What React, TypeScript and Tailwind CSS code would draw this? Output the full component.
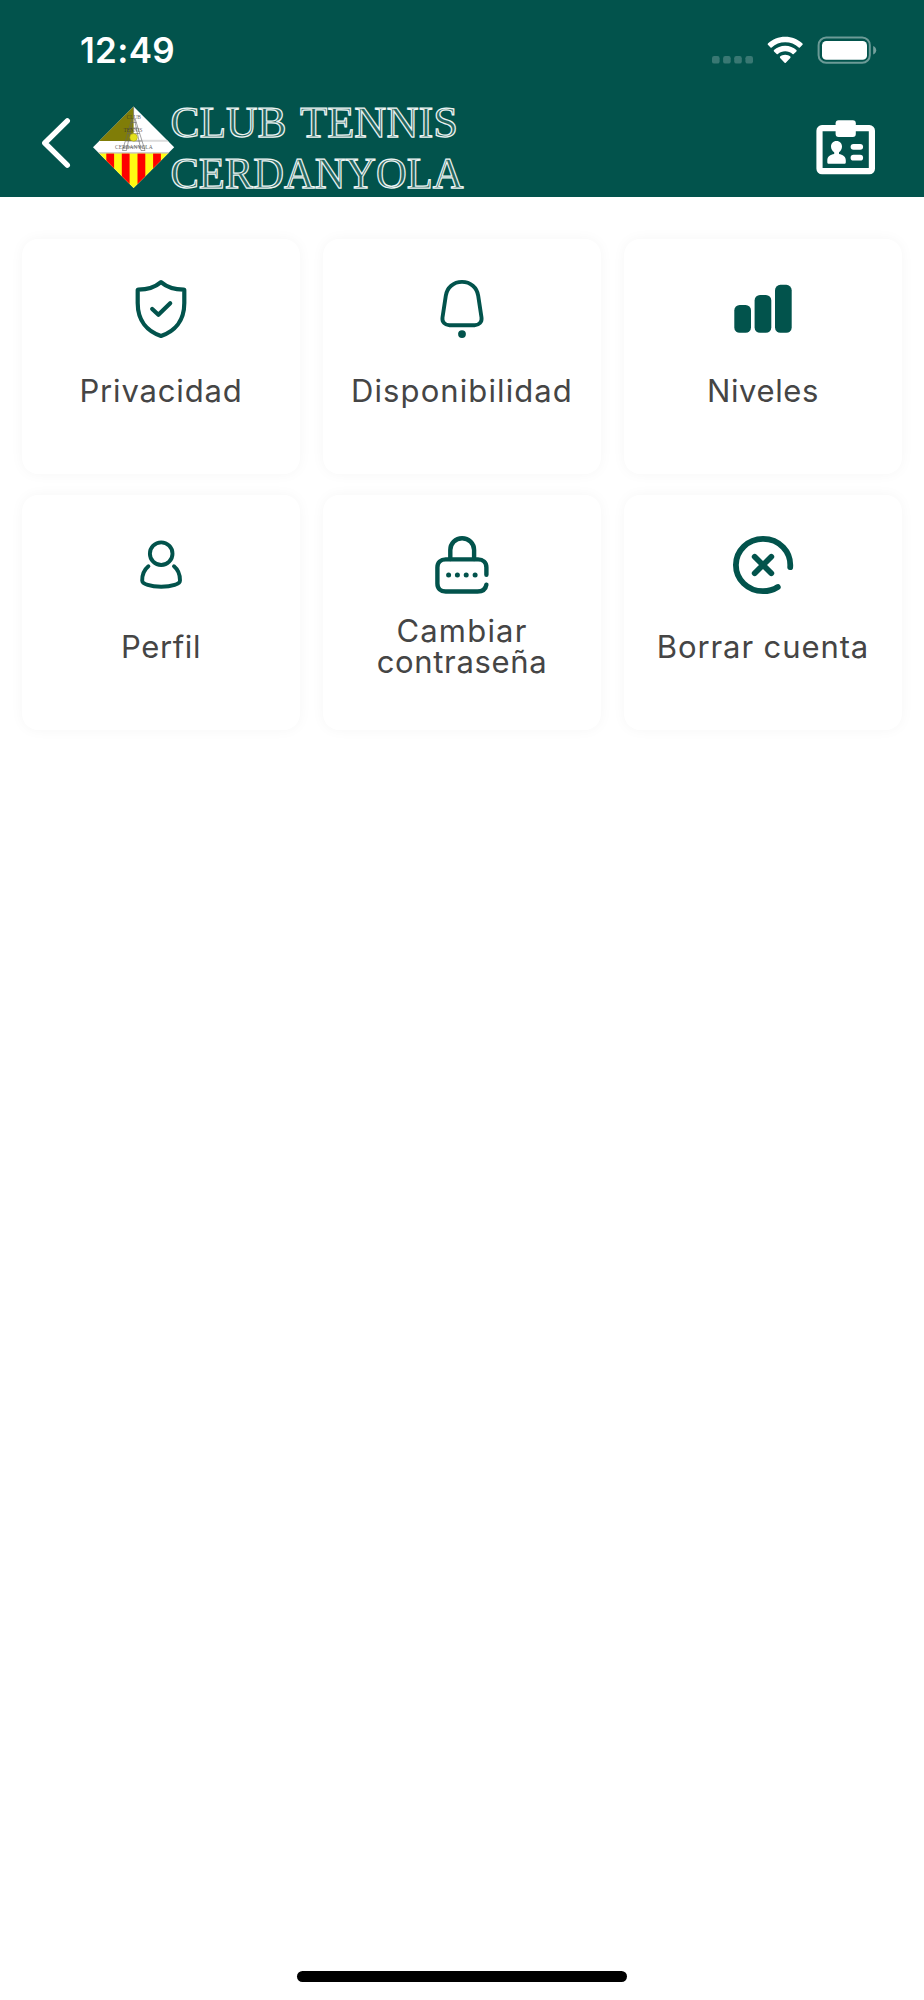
import type { ReactNode } from "react";

const TEAL = "#02534c";

function StatusBar() {
  return (
    <div className="flex h-[102px] items-start justify-between pr-[47px] pl-[80px] text-white">
      <span className="mt-[29px] font-['Inter',sans-serif] text-[35px] leading-[42px] font-semibold tracking-[0.3px]">
        12:49
      </span>
      <div className="mt-[36px] flex items-start">
        <svg width="42" height="30" viewBox="0 0 42 30" fill="#fff" fillOpacity="0.22">
          <rect x="0" y="20" width="7.6" height="7.6" rx="2.2" />
          <rect x="11.1" y="20" width="7.6" height="7.6" rx="2.2" />
          <rect x="22.2" y="20" width="7.6" height="7.6" rx="2.2" />
          <rect x="33.4" y="20" width="7.6" height="7.6" rx="2.2" />
        </svg>
        <svg className="ml-[13px]" width="37" height="28" viewBox="0 0 37 28" fill="#fff">
          <path d="M18.2 0.8C24.9 0.8 31 3.3 35.5 7.5C35.9 7.9 35.9 8.4 35.5 8.8L32.9 11.4C32.6 11.7 32 11.7 31.7 11.4C28.1 8.1 23.4 6.3 18.2 6.3C13 6.3 8.3 8.1 4.7 11.4C4.4 11.7 3.8 11.7 3.5 11.4L0.9 8.8C0.5 8.4 0.5 7.9 0.9 7.5C5.4 3.3 11.5 0.8 18.2 0.8Z" />
          <path d="M18.2 9.8C22.6 9.8 26.5 11.4 29.4 14.1C29.8 14.5 29.8 15 29.4 15.4L26.7 18C26.4 18.3 25.9 18.3 25.5 18C23.5 16.3 21 15.3 18.2 15.3C15.4 15.3 12.9 16.3 10.9 18C10.5 18.3 10 18.3 9.7 18L7 15.4C6.6 15 6.6 14.5 7 14.1C9.9 11.4 13.8 9.8 18.2 9.8Z" />
          <path d="M18.2 18.8C20.3 18.8 22 19.5 23.3 20.6C23.7 20.9 23.7 21.5 23.3 21.9L18.8 26.8C18.4 27.2 18 27.2 17.6 26.8L13.1 21.9C12.7 21.5 12.7 20.9 13.1 20.6C14.4 19.5 16.1 18.8 18.2 18.8Z" />
        </svg>
        <svg className="ml-[13px]" width="60" height="29" viewBox="0 0 60 29" fill="none">
          <rect x="1.6" y="1.6" width="51.2" height="25.2" rx="7.6" stroke="#fff" strokeOpacity="0.42" strokeWidth="2" />
          <rect x="5" y="5" width="45" height="18.8" rx="4.4" fill="#fff" />
          <path d="M56.2 10C58.2 10.8 59.2 12.4 59.2 14.3C59.2 16.2 58.2 17.8 56.2 18.6Z" fill="#fff" fillOpacity="0.45" />
        </svg>
      </div>
    </div>
  );
}

function ClubLogo() {
  return (
    <svg
      className="-mt-[12px] ml-[21px] overflow-visible"
      width="376"
      height="114"
      viewBox="92 90 376 114"
      fontFamily="'Liberation Serif', serif"
    >
      <defs>
        <clipPath id="diamond">
          <path d="M133.6 106.5L174.2 147.2L133.6 188L93 147.2Z" />
        </clipPath>
      </defs>
      <g clipPath="url(#diamond)">
        <rect x="92" y="106" width="84" height="84" fill="#fff" />
        <rect x="92" y="106" width="41.6" height="35" fill="#807d08" />
        <rect x="133.6" y="139.8" width="42" height="2" fill="#dcdcdc" />
        <rect x="92" y="153" width="84" height="36" fill="#fffb12" />
        <rect x="92" y="152.2" width="84" height="1.4" fill="#c9c4bb" />
        <rect x="106.3" y="153.6" width="7.8" height="36" fill="#fe0000" />
        <rect x="121.8" y="153.6" width="7.8" height="36" fill="#fe0000" />
        <rect x="137.5" y="153.6" width="7.8" height="36" fill="#fe0000" />
        <rect x="153.1" y="153.6" width="7.8" height="36" fill="#fe0000" />
      </g>
      <g fill="none" stroke="#666" strokeOpacity="0.6" strokeWidth="1">
        <path d="M131.8 119L122.5 150.5H126.5L132.8 119M135.2 119L145 150.5H141L134.4 119" />
        <path d="M131 122.5H136.4M129.5 128H138M127.5 133.5H139.6M125.5 141H141.6M124 147H143.4M133.6 107V119" />
      </g>
      <circle cx="133.6" cy="137.4" r="3.8" fill="#e3e01c" stroke="#99951c" strokeWidth="0.5" />
      <g fill="#333" fillOpacity="0.8">
        <text x="126.4" y="118.6" fontSize="6.6" textLength="14.6" lengthAdjust="spacingAndGlyphs">CLUB</text>
        <text x="123.4" y="132" fontSize="6.6" textLength="19" lengthAdjust="spacingAndGlyphs">TENNIS</text>
        <text x="115" y="149.4" fontSize="6.8" textLength="37.6" lengthAdjust="spacingAndGlyphs">CERDANYOLA</text>
      </g>
      <g fontSize="45" fill="#23665f" stroke="#eef4f3" strokeWidth="1.25">
        <text x="170.5" y="136.8" textLength="116" lengthAdjust="spacingAndGlyphs">CLUB</text>
        <text x="300" y="136.8" textLength="158" lengthAdjust="spacingAndGlyphs">TENNIS</text>
        <text x="170.5" y="187.8" textLength="293" lengthAdjust="spacingAndGlyphs">CERDANYOLA</text>
      </g>
    </svg>
  );
}

function NavBar() {
  return (
    <div className="flex h-[92px] items-start pl-[40px]">
      <button aria-label="Atrás" className="mt-[14px]">
        <svg width="31" height="54" viewBox="40 116 31 54" fill="none" stroke="#fff" strokeWidth="5.4" strokeLinecap="round" strokeLinejoin="round">
          <path d="M67.3 120.8L44.8 143L67.3 165.2" />
        </svg>
      </button>
      <ClubLogo />
      <button aria-label="Carnet" className="mt-[17px] mr-[48px] ml-auto">
        <svg width="61" height="57" viewBox="815 119 61 57">
          <rect x="819.5" y="128.2" width="52.4" height="43" rx="2.5" fill="none" stroke="#fff" strokeWidth="6.2" />
          <rect x="835.6" y="120.2" width="20.2" height="16.8" rx="3" fill="#fff" />
          <path fill="#fff" d="M836.5 141C840 141 842 143.6 842 146.6C842 149 840.8 151.2 839 152.3V153.9C842.6 154.4 845.8 156.4 845.8 160.4V162.2C845.8 163.2 845.2 163.8 844.2 163.8H828.9C827.9 163.8 827.3 163.2 827.3 162.2V160.4C827.3 156.4 830.4 154.4 834.2 153.9V152.3C832.3 151.2 831 149 831 146.6C831 143.6 833 141 836.5 141Z" />
          <rect x="850.6" y="143.9" width="12.5" height="5.8" rx="2.9" fill="#fff" />
          <rect x="850.6" y="154.8" width="12.5" height="5.8" rx="2.9" fill="#fff" />
        </svg>
      </button>
    </div>
  );
}

function Icon({ children, stroke = 4.2 }: { children: ReactNode; stroke?: number }) {
  return (
    <svg
      width="62"
      height="60"
      viewBox="0 0 62 60"
      fill="none"
      stroke={TEAL}
      strokeWidth={stroke}
      strokeLinecap="round"
      strokeLinejoin="round"
    >
      {children}
    </svg>
  );
}

const items: { lines: { text: string; tracking: string }[]; icon: ReactNode }[] = [
  {
    lines: [{ text: "Privacidad", tracking: "tracking-[0.85px]" }],
    icon: (
      <Icon>
        <path d="M31 3.2C25.2 8.2 17 10.7 8.3 10.7C7.9 10.7 7.7 10.9 7.7 11.3V24C7.7 42 17.5 52.5 31 57C44.5 52.5 54.3 42 54.3 24V11.3C54.3 10.9 54.1 10.7 53.7 10.7C45 10.7 36.8 8.2 31 3.2Z" />
        <path d="M22.2 30L28.4 35.8L40.2 24.2" />
      </Icon>
    ),
  },
  {
    lines: [{ text: "Disponibilidad", tracking: "tracking-[1.1px]" }],
    icon: (
      <Icon stroke={3.9}>
        <path d="M31 2.9C22.5 2.9 16 8.6 14.8 16.8L11.5 38.5C10.8 43 14 46.2 18.4 46.2H43.6C48 46.2 51.2 43 50.5 38.5L47.2 16.8C46 8.6 39.5 2.9 31 2.9Z" />
        <circle cx="31" cy="55.1" r="3.9" fill={TEAL} stroke="none" />
      </Icon>
    ),
  },
  {
    lines: [{ text: "Niveles", tracking: "tracking-[0.6px]" }],
    icon: (
      <Icon>
        <g fill={TEAL} stroke="none">
          <rect x="2.3" y="26" width="16.7" height="27.8" rx="5.4" />
          <rect x="22.6" y="16" width="16.7" height="37.8" rx="5.4" />
          <rect x="43" y="5.8" width="16.7" height="48" rx="5.4" />
        </g>
      </Icon>
    ),
  },
  {
    lines: [{ text: "Perfil", tracking: "tracking-[0.65px]" }],
    icon: (
      <Icon stroke={3.9}>
        <circle cx="31.2" cy="18.7" r="11.3" />
        <path d="M18.4 31.3C14.4 34.6 12.2 40 12.2 45.4C12.2 49 20.5 51.7 31.2 51.7C41.9 51.7 50 49 50 45.4C50 40 48 34.6 44 31.3" />
      </Icon>
    ),
  },
  {
    lines: [
      { text: "Cambiar", tracking: "tracking-[1.2px]" },
      { text: "contraseña", tracking: "tracking-[0.65px]" },
    ],
    icon: (
      <Icon stroke={4.4}>
        <path d="M19.3 24V15C19.3 8.4 24.5 3.2 31.1 3.2C37.7 3.2 43.1 8.4 43.1 15V24" />
        <path d="M55.4 39.8V32.5C55.4 27.6 52 24.4 47 24.4H14.7C9.7 24.4 6.4 27.6 6.4 32.5V48.4C6.4 53.4 9.7 56.5 14.7 56.5H46.5C51.5 56.5 54.7 54.1 55.4 49.6" />
        <g fill={TEAL} stroke="none">
          <circle cx="17.6" cy="40" r="2.5" />
          <circle cx="26.4" cy="40" r="2.5" />
          <circle cx="35.2" cy="40" r="2.5" />
          <circle cx="44.1" cy="40" r="2.5" />
        </g>
      </Icon>
    ),
  },
  {
    lines: [{ text: "Borrar cuenta", tracking: "tracking-[0.9px]" }],
    icon: (
      <Icon stroke={5.8}>
        <path d="M58.2 32.2C59.3 16.8 47.4 3.9 31 3.9C15.8 3.9 3.9 15.8 3.9 30C3.9 44.5 15.8 56.2 31 56.2C36.5 56.2 41.5 54.8 45.8 52" />
        <path d="M22.7 21.8L39.3 38.2M39.3 21.8L22.7 38.2" />
      </Icon>
    ),
  },
];

export default function App() {
  return (
    <div className="flex h-[2000px] w-[924px] flex-col bg-white">
      <header className="h-[196.5px] shrink-0 bg-[#02534c]">
        <StatusBar />
        <NavBar />
      </header>
      <main className="grid grid-cols-3 gap-x-[23px] gap-y-[21px] px-[22px] pt-[42.5px]">
        {items.map((item, i) => (
          <button
            key={i}
            className="flex h-[235px] flex-col items-center rounded-[16px] bg-white pt-[40px] shadow-[0_0_14px_rgba(0,0,0,0.04)]"
          >
            {item.icon}
            <span className="mt-[20px] flex h-[62px] flex-col items-center justify-center text-center font-['Inter',sans-serif] text-[31px] leading-[31px] font-normal whitespace-nowrap text-[#454545]">
              {item.lines.map((line) => (
                <span key={line.text} className={line.tracking}>
                  {line.text}
                </span>
              ))}
            </span>
          </button>
        ))}
      </main>
      <div className="mt-auto mb-[18px] h-[11.5px] w-[330px] self-center rounded-full bg-black" />
    </div>
  );
}
